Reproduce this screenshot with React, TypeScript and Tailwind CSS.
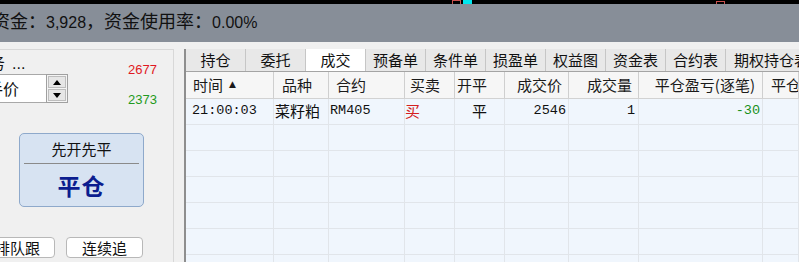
import { FC } from 'react'

interface Column {
   title: string
   width: string
   head: string
   cell: string
}

const columns: Column[] = [
   { title: '时间', width: 'w-[88px]', head: 'justify-start pl-[7px]', cell: 'justify-start pl-[6px]' },
   { title: '品种', width: 'w-[55px]', head: 'justify-start pl-[8px]', cell: 'justify-start pl-[1px]' },
   { title: '合约', width: 'w-[76px]', head: 'justify-start pl-[7px]', cell: 'justify-start pl-[1px]' },
   { title: '买卖', width: 'w-[50px]', head: 'justify-start pl-[5px]', cell: 'justify-start pl-0' },
   { title: '开平', width: 'w-[50px]', head: 'justify-start pl-[2px]', cell: 'justify-center' },
   { title: '成交价', width: 'w-[64px]', head: 'justify-end pr-[6px]', cell: 'justify-end pr-[2px]' },
   { title: '成交量', width: 'w-[70px]', head: 'justify-end pr-[6px]', cell: 'justify-end pr-[3px]' },
   { title: '平仓盈亏(逐笔)', width: 'w-[124px]', head: 'justify-end pr-[7px]', cell: 'justify-end pr-[2px]' },
   { title: '平仓盈亏(盯市)', width: 'flex-1', head: 'justify-start pl-[8px]', cell: 'justify-start' },
]

const tabs = ['持仓', '委托', '成交', '预备单', '条件单', '损盈单', '权益图', '资金表', '合约表', '期权持仓表']

const cjk = "font-['Noto_Sans_CJK_SC',sans-serif]"
const mono = "font-['Liberation_Mono','Noto_Sans_CJK_SC',monospace]"

const trade = [
   <span className={`${mono} text-[13.5px]`}>21:00:03</span>,
   <span className={`${cjk} text-[15px]`}>菜籽粕</span>,
   <span className={`${mono} text-[13.5px]`}>RM405</span>,
   <span className={`${cjk} text-[15px] text-[#d42020]`}>买</span>,
   <span className={`${cjk} text-[15px]`}>平</span>,
   <span className={`${mono} text-[13.5px]`}>2546</span>,
   <span className={`${mono} text-[13.5px]`}>1</span>,
   <span className={`${mono} text-[13.5px] text-[#17901a]`}>-30</span>,
   null,
]

const LeftPanel: FC = () => (
   <div className="w-[174px] mt-[7px] border-t border-r border-[#d8d8d8] shrink-0 overflow-hidden">
      <div className="flex">
         <div className="w-[68px] shrink-0">
            <div className={`${cjk} h-[24px] leading-[24px] text-[16px] text-[#111] whitespace-nowrap ml-[-11px]`}>
               务<span className="ml-[7px] font-['Liberation_Sans']">...</span>
            </div>
            <div className="h-[29px] flex">
               <div className="w-[46px] border-t border-b border-[#a8a8a8] bg-white overflow-hidden">
                  <div className={`${cjk} text-[16px] leading-[26px] whitespace-nowrap ml-[-13px] text-[#111]`}>手价</div>
               </div>
               <div className="w-[22px] border border-[#a0a0a0] bg-[#f4f4f4] flex flex-col p-[1px] gap-[1px]">
                  <div className="flex-1 bg-[#e6e6e6] border border-[#bdbdbd] flex items-center justify-center">
                     <div className="w-0 h-0 border-l-[4px] border-r-[4px] border-b-[5px] border-l-transparent border-r-transparent border-b-black" />
                  </div>
                  <div className="flex-1 bg-[#e6e6e6] border border-[#bdbdbd] flex items-center justify-center">
                     <div className="w-0 h-0 border-l-[4px] border-r-[4px] border-t-[5px] border-l-transparent border-r-transparent border-t-black" />
                  </div>
               </div>
            </div>
         </div>
         <div className="ml-[60px] font-['Liberation_Sans',sans-serif] text-[13px]">
            <div className="mt-[13px] h-[14px] leading-[14px] text-[#e01822]">2677</div>
            <div className="mt-[16px] h-[14px] leading-[14px] text-[#1f9a20]">2373</div>
         </div>
      </div>

      <div className="ml-[19px] mt-[26px] w-[125px] h-[74px] rounded-[5px] border border-[#8ea9cb] bg-[#d7e3f2] flex flex-col">
         <div className={`${cjk} h-[29px] pt-[2px] flex items-center justify-center text-[15px] text-[#111]`}>先开先平</div>
         <div className="mx-[4px] h-px bg-[#8a8a8a]" />
         <div className={`${cjk} flex-1 flex items-center justify-center text-[23px] font-bold text-[#0b1d8f] tracking-[1px]`}>平仓</div>
      </div>

      <div className="flex mt-[30px] gap-[11px]">
         <div className={`${cjk} ml-[-20px] w-[75px] h-[21px] rounded-[4px] border border-[#b8b8b8] bg-white text-[15px] leading-[19px] pl-[14px] whitespace-nowrap text-[#111]`}>
            排队跟
         </div>
         <div className={`${cjk} w-[77px] h-[21px] rounded-[4px] border border-[#b8b8b8] bg-white text-[15px] leading-[19px] text-center text-[#111]`}>
            连续追
         </div>
      </div>
   </div>
)

const TradeTable: FC = () => (
   <div className="flex-1 min-w-0 mt-[7px] ml-[10px] border-l-2 border-[#8e8e8e] flex flex-col overflow-hidden">
      <div className="h-[22px] flex shrink-0 overflow-hidden">
         {tabs.map((t, i) => (
            <div
               key={t}
               className={`${cjk} shrink-0 flex items-center text-[15px] text-[#111] whitespace-nowrap border-r border-[#c6c6c6] ${
                  i === tabs.length - 1 ? 'w-[90px] justify-start pl-[8px]' : 'w-[60px] justify-center'
               } ${t === '成交' ? 'bg-white' : 'bg-[#e8e8e8]'}`}
            >
               {t}
            </div>
         ))}
      </div>
      <div className="border-t border-[#a4a4a4] flex-1 bg-[#f0f6fd]">
         <div className="h-[27px] flex bg-[#f6f6f6] border-b border-[#d2d2d2]">
            {columns.map((c, i) => (
               <div
                  key={c.title}
                  className={`${cjk} ${c.width} ${c.head} shrink-0 flex items-center text-[15px] text-[#1a1a1a] whitespace-nowrap overflow-hidden border-r border-[#cfcfcf]`}
               >
                  {c.title}
                  {i === 0 && <span className="ml-[6px] text-[9px] font-['DejaVu_Sans']">▲</span>}
               </div>
            ))}
         </div>
         {[0, 1, 2, 3, 4, 5, 6].map((r) => (
            <div key={r} className="h-[26px] flex border-b border-[#e1e5ea]">
               {columns.map((c, i) => (
                  <div
                     key={c.title}
                     className={`${c.width} ${c.cell} shrink-0 flex items-center text-[#111] whitespace-nowrap border-r border-[#e1e5ea]`}
                  >
                     {r === 0 ? trade[i] : null}
                  </div>
               ))}
            </div>
         ))}
      </div>
   </div>
)

const App: FC = () => {
   return (
      <div className="w-[799px] h-[262px] overflow-hidden bg-[#f0f0f0] flex flex-col">
         <div className="h-[4px] bg-black flex items-start shrink-0">
            <div className="ml-[452px] w-[9px] h-[5px] border border-[#c9504e]" />
            <div className="ml-[2px] w-[9px] h-[4px] bg-[#00e6ee]" />
            <div className="ml-[244px] mt-[1px] w-[9px] h-[4px] border border-[#c9504e]" />
         </div>
         <div className="h-[38px] bg-[#878e98] flex items-center pb-[4px] shrink-0 overflow-hidden">
            <div className="ml-[-8px] whitespace-nowrap text-[#111] flex items-baseline">
               <span className={`${cjk} text-[18px]`}>资金：</span>
               <span className="font-['Liberation_Sans',sans-serif] text-[16px]">3,928</span>
               <span className={`${cjk} text-[18px]`}>，资金使用率：</span>
               <span className="font-['Liberation_Sans',sans-serif] text-[16px]">0.00%</span>
            </div>
         </div>
         <div className="flex flex-1 min-h-0">
            <LeftPanel />
            <TradeTable />
         </div>
      </div>
   )
}

export default App
